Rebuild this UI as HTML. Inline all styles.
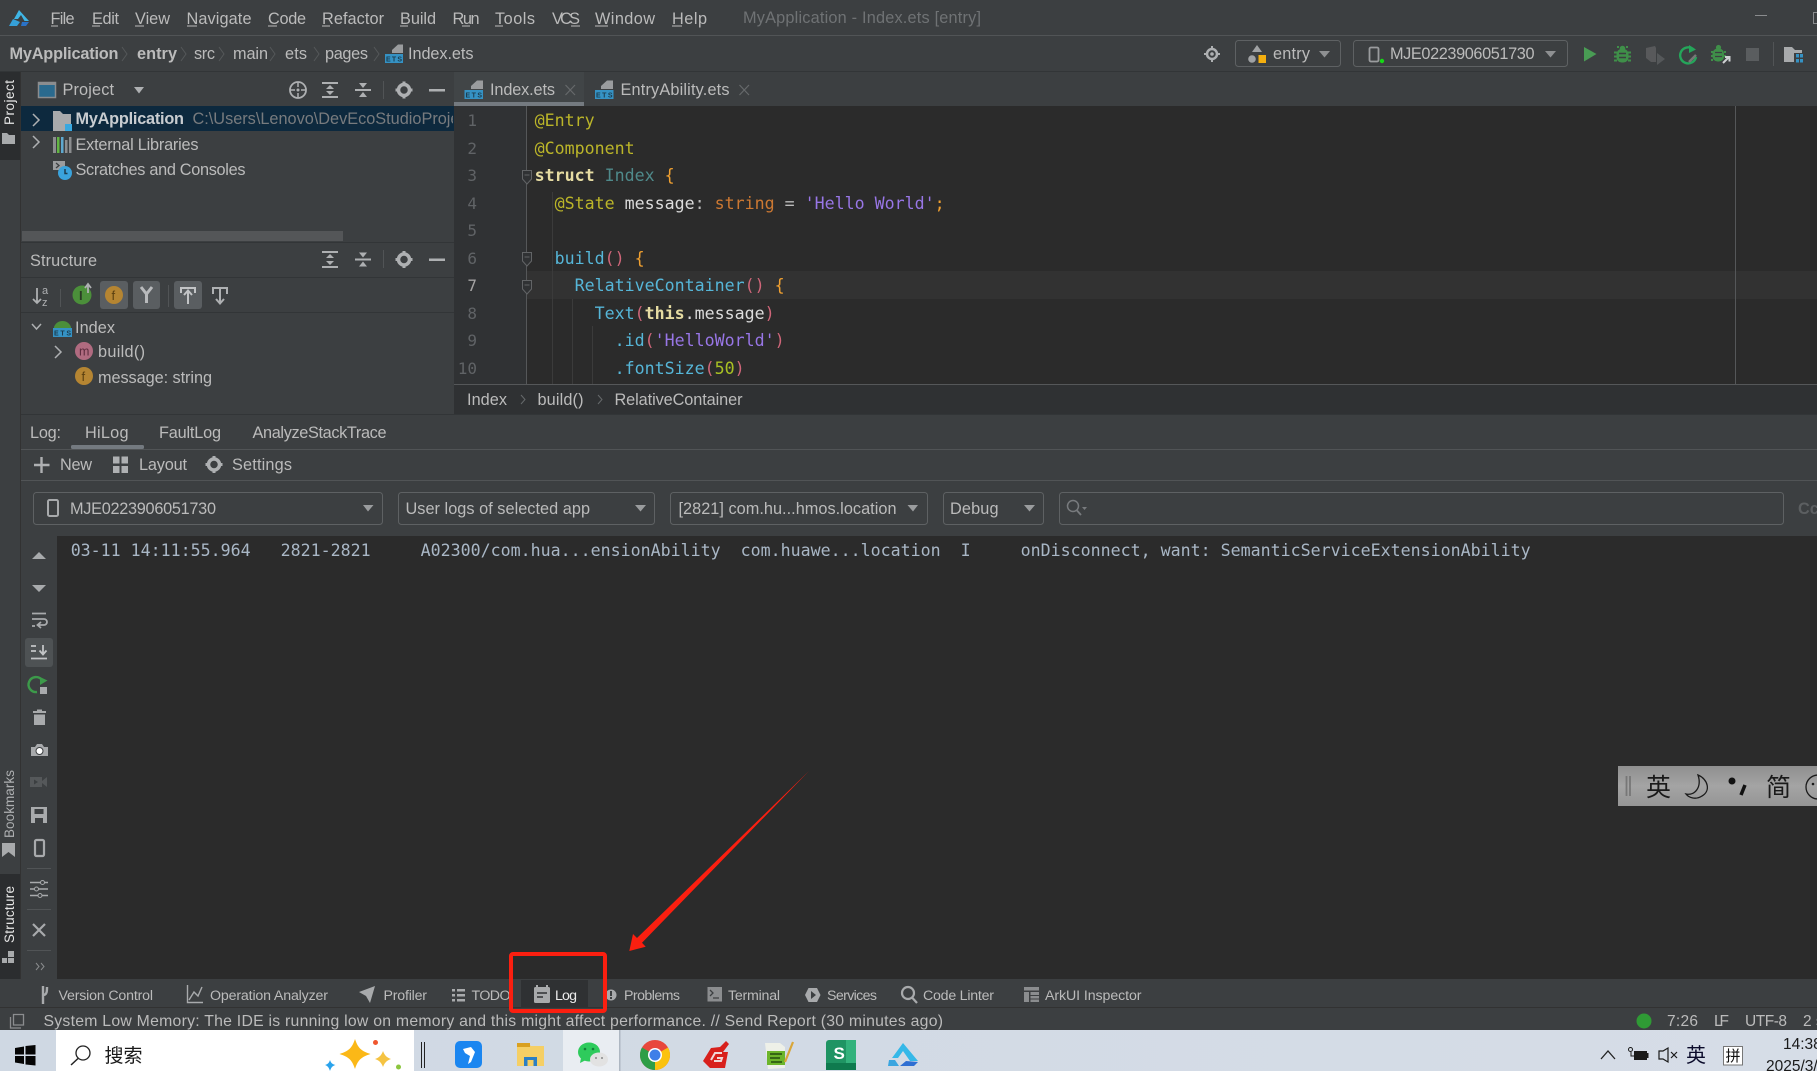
<!DOCTYPE html>
<html lang="en"><head><meta charset="utf-8"><title>MyApplication - Index.ets [entry]</title>
<style>
html,body{margin:0;padding:0;background:#3c3f41;overflow:hidden}
svg{display:block;position:absolute;left:0;top:0}
text{font-family:"Liberation Sans","Noto Sans CJK SC",sans-serif;font-size:16.3px;fill:#bbbbbb;white-space:pre}
.m{font-family:"DejaVu Sans Mono","Liberation Mono",monospace;font-size:16.62px}
.b{font-weight:bold}
.ln{font-family:"DejaVu Sans Mono",monospace;font-size:16px;fill:#606366;text-anchor:end}
.ts{font-size:14.2px}
.e{font-size:7px;font-weight:bold;fill:#1c3c4e}
.y{fill:#bbb529}.w{fill:#dcdcdc}.o{fill:#cc7832}.p{fill:#9876e6}.c{fill:#56b6d8}.r{fill:#cf6679}.br{fill:#f0a030}.k{fill:#e6dca2;font-weight:bold}.t{fill:#4f8a8b}.g{fill:#a8c023}.s{fill:#bbbbbb}
.cn{font-family:"Noto Sans CJK SC",sans-serif;fill:#1a1a1a}
</style></head><body>
<svg width="1817" height="1071" viewBox="0 0 1817 1071" xmlns="http://www.w3.org/2000/svg">
<rect width="1817" height="1071" fill="#3c3f41"/>
<!-- separators -->
<rect y="35" width="1817" height="1" fill="#515456"/>
<rect y="71" width="1817" height="1" fill="#323537"/>
<!-- logo -->
<path d="M19 10 L14 19 L18 19 L21 15 L24.500 21 L29 21 Z" fill="#3fb6e6"/>
<path d="M13 19 L9 26 L17 26 L20 22 Z" fill="#35a0d8"/><path d="M22 22 L29 22 L26 26 L21 26 Z" fill="#2a72c8"/>
<!-- menu -->
<g>
<text x="50.500" y="24" textLength="24">File</text><rect x="51" y="25.500" width="7" height="1" fill="#bbb"/>
<text x="92" y="24" textLength="27">Edit</text><rect x="92" y="25.500" width="8" height="1" fill="#bbb"/>
<text x="135" y="24" textLength="35">View</text><rect x="135" y="25.500" width="9" height="1" fill="#bbb"/>
<text x="186.500" y="24" textLength="65">Navigate</text><rect x="187" y="25.500" width="10" height="1" fill="#bbb"/>
<text x="268" y="24" textLength="38">Code</text><rect x="268" y="25.500" width="9" height="1" fill="#bbb"/>
<text x="322" y="24" textLength="62">Refactor</text><rect x="322" y="25.500" width="8" height="1" fill="#bbb"/>
<text x="400" y="24" textLength="36">Build</text><rect x="400" y="25.500" width="8" height="1" fill="#bbb"/>
<text x="452.500" y="24" textLength="27">Run</text><rect x="462" y="25.500" width="8" height="1" fill="#bbb"/>
<text x="495" y="24" textLength="40">Tools</text><rect x="495" y="25.500" width="8" height="1" fill="#bbb"/>
<text x="552" y="24" textLength="28">VCS</text><rect x="571" y="25.500" width="9" height="1" fill="#bbb"/>
<text x="595" y="24" textLength="60">Window</text><rect x="595" y="25.500" width="13" height="1" fill="#bbb"/>
<text x="672" y="24" textLength="35">Help</text><rect x="672" y="25.500" width="10" height="1" fill="#bbb"/>
<text x="743" y="23" textLength="238" style="fill:#6f7274">MyApplication - Index.ets [entry]</text>
</g>
<rect x="1755" y="15" width="12" height="1" fill="#8a8c8e"/>
<rect x="1813.500" y="12.500" width="8" height="11" fill="none" stroke="#8a8c8e"/>
<!-- navbar -->
<g fill="none" stroke="#55585a" stroke-width="1">
<path d="M122 47 L127 54 L122 61M181 47 L186 54 L181 61M219 47 L224 54 L219 61M270 47 L275 54 L270 61M314 47 L319 54 L314 61M374 47 L379 54 L374 61"/>
</g>
<text x="9.500" y="59" textLength="109" class="b">MyApplication</text>
<text x="137" y="59" textLength="40" class="b">entry</text>
<text x="194" y="59" textLength="21">src</text>
<text x="233" y="59" textLength="35">main</text>
<text x="285" y="59" textLength="22">ets</text>
<text x="325" y="59" textLength="43">pages</text>
<g><path d="M392 53 V50 L398 44.500 H403 V53 Z" fill="#9a9c9e"/><rect x="385" y="54" width="18" height="9" fill="#3592c4"/><text x="386" y="61.500" class="e" textLength="16">ETS</text></g>
<text x="408" y="59" textLength="65.500">Index.ets</text>

<!-- right nav -->
<circle cx="1212" cy="54" r="5" fill="none" stroke="#aeb0b2" stroke-width="2.500"/><circle cx="1212" cy="54" r="1.800" fill="#aeb0b2"/><path d="M1212 46v2M1212 60v2M1204 54h2M1218 54h2" stroke="#aeb0b2" stroke-width="2"/>
<rect x="1235.500" y="40.500" width="105" height="26" rx="3" fill="none" stroke="#5e6163"/>
<path d="M1257 45 L1262 52 H1252 Z" fill="#a0a2a4"/><circle cx="1252" cy="59" r="3.800" fill="#a0a2a4"/><rect x="1258.500" y="55" width="7.500" height="8" fill="#f4af0f"/>
<text x="1273" y="59" textLength="37">entry</text>
<path d="M1319 51 H1330 L1324.500 57.500 Z" fill="#8e9092"/>
<rect x="1353.500" y="40.500" width="214" height="26" rx="3" fill="none" stroke="#5e6163"/>
<rect x="1369.500" y="47.500" width="9" height="14" rx="1.500" fill="none" stroke="#9a9c9e" stroke-width="1.800"/><circle cx="1382" cy="61" r="2.200" fill="#15d815"/>
<text x="1390" y="59" textLength="144.500">MJE0223906051730</text>
<path d="M1545 51 H1556 L1550.500 57.500 Z" fill="#8e9092"/>
<path d="M1584 47 L1596.500 54 L1584 61.500 Z" fill="#499c54"/>
<!-- bug -->
<g fill="#3f8f49"><rect x="1616.500" y="49" width="12" height="13.500" rx="5"/><circle cx="1622.500" cy="48.500" r="2.800"/><path d="M1614 51.500h3v2h-3zM1628 51.500h3v2h-3zM1614 55.500h3v2h-3zM1628 55.500h3v2h-3zM1614 59.500h3v2h-3zM1628 59.500h3v2h-3zM1617 46h2v2h-2zM1626 46h2v2h-2z"/></g><path d="M1619 53.500h7M1619 57.500h7" stroke="#3c3f41" stroke-width="1.400"/>
<path d="M1646 48 L1655 46 L1656 48 V62 L1651 62 L1646 58Z" fill="#58595b"/><path d="M1657 53 L1665 59 L1657 65 Z" fill="#55585a"/>
<path d="M1693 49 A8 8 0 1 0 1696 57" fill="none" stroke="#25a55a" stroke-width="2.400"/><path d="M1689 45 L1696 49.500 L1689 53 Z" fill="#25a55a"/><path d="M1689 62 L1696 55" stroke="#777" stroke-width="2.500"/>
<g fill="#3f8f49"><rect x="1712.500" y="48.500" width="11.500" height="13" rx="5"/><circle cx="1718.500" cy="47.500" r="2.600"/><path d="M1711 51h2v2h-2zM1724 51h2v2h-2zM1711 55h2v2h-2zM1724 55h2v2h-2zM1711 59h2v2h-2z"/></g><path d="M1715 52.500h7M1715 56.500h7" stroke="#3c3f41" stroke-width="1.300"/><path d="M1723 63 L1729 57 M1725 57 h4.500 v4.500" stroke="#cfd1d3" stroke-width="2" fill="none"/>
<rect x="1746" y="48" width="13" height="13" fill="#5a5d5f"/>
<rect x="1773" y="42" width="1" height="24" fill="#515456"/>
<path d="M1784 47 H1792 L1795 50 H1802 V53 H1794 V62 H1784 Z" fill="#a8aaac"/><rect x="1796" y="54" width="3" height="3.500" fill="#3592c4"/><rect x="1800" y="54" width="3" height="3.500" fill="#3592c4"/><rect x="1796" y="59" width="3" height="3.500" fill="#3592c4"/><rect x="1800" y="59" width="3" height="3.500" fill="#3592c4"/>

<!-- left stripe -->
<rect x="20" y="72" width="1" height="907" fill="#323232"/>
<rect x="0" y="72" width="20" height="88" fill="#2b2d2f"/>
<text transform="translate(14,125) rotate(-90)" textLength="45" style="fill:#e6e6e6;font-size:13.500px">Project</text>
<path d="M2 133 H7 L9 135 H15 V144 H2 Z" fill="#a8aaac"/>
<text transform="translate(14,838) rotate(-90)" textLength="68" style="fill:#aeb0b2;font-size:13.500px">Bookmarks</text>
<path d="M2 843 H15 V857 L8.500 852 L2 857 Z" fill="#a8aaac"/>
<rect x="0" y="874" width="20" height="105" fill="#2b2d2f"/>
<text transform="translate(14,943) rotate(-90)" textLength="57" style="fill:#e6e6e6;font-size:13.500px">Structure</text>
<path d="M2 958h5v5h-5zM8 958h6v5h-6zM8 951h6v6h-6z" fill="#a8aaac"/>

<!-- project panel -->
<rect x="38.500" y="82.500" width="17" height="15" fill="#2a6a8e" stroke="#8b8d8f" stroke-width="1.500"/><rect x="38" y="82" width="18" height="3" fill="#8b8d8f"/>
<text x="62.500" y="95" textLength="51.500">Project</text>
<path d="M134 87 H144 L139 93.500 Z" fill="#aeb0b2"/>
<circle cx="298" cy="90" r="8" fill="none" stroke="#aeb0b2" stroke-width="1.800"/><circle cx="298" cy="90" r="1.500" fill="#aeb0b2"/><path d="M298 82v5M298 93v5M290 90h5M301 90h5" stroke="#aeb0b2" stroke-width="1.500"/>
<g fill="#aeb0b2"><rect x="322" y="82" width="16" height="2"/><rect x="322" y="96" width="16" height="2"/><path d="M330 85 L334 89 H326 Z M330 95 L334 91 H326 Z"/></g>
<g fill="#aeb0b2"><rect x="355" y="89" width="16" height="2"/><path d="M363 88 L367 83 H359 Z M363 92 L367 97 H359 Z"/></g>
<rect x="383" y="81" width="1" height="18" fill="#515456"/>
<circle cx="404" cy="90" r="5.500" fill="none" stroke="#aeb0b2" stroke-width="3.500"/><path d="M402.500 81.500h3v3h-3zM402.500 95.500h3v3h-3zM395.500 88.500h3v3h-3zM409.500 88.500h3v3h-3z" fill="#aeb0b2"/>
<rect x="429" y="89" width="16" height="2.500" fill="#aeb0b2"/>

<!-- tree -->
<rect x="21" y="106" width="433" height="25" fill="#0d293e"/>
<path d="M33 136 L39 142 L33 148M33 114 L39 120 L33 126" fill="none" stroke="#aeb0b2" stroke-width="1.500"/>
<path d="M53 111 H60 L63 114 H71 V124 H65 V131 H53 Z" fill="#a8aaac"/><rect x="65" y="124" width="7" height="7" fill="#38a8e0"/>
<text x="75.500" y="124" textLength="108.500" class="b" style="fill:#c8ccd0">MyApplication</text>
<svg x="0" y="106" width="453" height="25"><text x="192.500" y="18" style="fill:#787b7e">C:\Users\Lenovo\DevEcoStudioProjects</text></svg>
<g><rect x="53" y="137" width="3" height="16" fill="#8b8d8f"/><rect x="57" y="137" width="2.500" height="16" fill="#62b543"/><rect x="61" y="137" width="2.500" height="16" fill="#5ea8cf"/><rect x="65" y="140" width="2.500" height="13" fill="#8b8d8f"/><rect x="69" y="137" width="2.500" height="16" fill="#8b8d8f"/></g>
<text x="75.500" y="150" textLength="123">External Libraries</text>
<path d="M53 161 H65 V170 H53 Z" fill="#9a9c9e"/><path d="M56 163 L59 165.500 L56 168" fill="none" stroke="#3c3f41" stroke-width="1.300"/><circle cx="65" cy="173" r="7" fill="#3aa3dc"/><path d="M65 169 V173.500 H67.500" fill="none" stroke="#1c3c4e" stroke-width="1.500"/>
<text x="75.500" y="175" textLength="170">Scratches and Consoles</text>
<rect x="22" y="231" width="321" height="10" fill="#545658"/>
<rect x="21" y="242" width="433" height="1" fill="#323537"/>

<!-- structure panel -->
<text x="30" y="266" textLength="67">Structure</text>
<g fill="#aeb0b2"><rect x="322" y="251" width="16" height="2"/><rect x="322" y="266" width="16" height="2"/><path d="M330 254 L334 258 H326 Z M330 265 L334 261 H326 Z"/></g>
<g fill="#aeb0b2"><rect x="355" y="258.500" width="16" height="2"/><path d="M363 257.500 L367 252.500 H359 Z M363 261.500 L367 266.500 H359 Z"/></g>
<rect x="383" y="250" width="1" height="18" fill="#515456"/>
<circle cx="404" cy="259.500" r="5.500" fill="none" stroke="#aeb0b2" stroke-width="3.500"/><path d="M402.500 251h3v3h-3zM402.500 265h3v3h-3zM395.500 258h3v3h-3zM409.500 258h3v3h-3z" fill="#aeb0b2"/>
<rect x="429" y="258.500" width="16" height="2.500" fill="#aeb0b2"/>
<rect x="21" y="277" width="433" height="1" fill="#323537"/>
<path d="M37 288 V303 M33 299 L37 303 L41 299" fill="none" stroke="#aeb0b2" stroke-width="1.800"/>
<text x="42" y="294" style="font-size:11px;fill:#aeb0b2">a</text><text x="42" y="306" style="font-size:11px;fill:#aeb0b2">z</text>
<rect x="60" y="289" width="1" height="18" fill="#515456"/>
<circle cx="82" cy="295" r="9.500" fill="#4b8f3a"/><text x="79" y="300" style="font-size:13px;fill:#2b3b25" class="b">I</text><path d="M88 293 V285 M85 288 L88 284 L91 288" stroke="#aeb0b2" stroke-width="1.800" fill="none"/>
<rect x="100" y="281" width="28" height="28" rx="3" fill="#5a5e61"/><circle cx="114" cy="295" r="9" fill="#b58532"/><text x="111.500" y="300" style="font-size:13px;fill:#5a3f10">f</text>
<rect x="133" y="281" width="27" height="28" rx="3" fill="#5a5e61"/><path d="M141 287 L146.500 294 L152 287 M146.500 294 V303" fill="none" stroke="#b8babc" stroke-width="3"/>
<rect x="168" y="285" width="1" height="22" fill="#515456"/>
<rect x="174" y="281" width="28" height="28" rx="3" fill="#5a5e61"/><path d="M181 293 V288 H195 V293 M188 304 V291 M184 295 L188 290.500 L192 295" fill="none" stroke="#c2c4c6" stroke-width="2"/>
<path d="M213 294 V288 H227 V294 M220 288.500 V303 M216 299 L220 303.500 L224 299" fill="none" stroke="#aeb0b2" stroke-width="2"/>
<rect x="21" y="312" width="433" height="1" fill="#323537"/>
<path d="M32 324 L36.500 329 L41 324" fill="none" stroke="#aeb0b2" stroke-width="1.500"/>
<path d="M54 327 A9 9 0 0 1 71 327 V328 H54 Z" fill="#4b8f3a"/><rect x="53" y="328" width="19" height="9" fill="#3592c4"/><text x="54" y="335.500" class="e" textLength="17">ETS</text>
<text x="75" y="333" textLength="40">Index</text>
<path d="M55 346 L61 352 L55 358" fill="none" stroke="#aeb0b2" stroke-width="1.500"/>
<circle cx="84" cy="351" r="9" fill="#b06b80"/><text x="79" y="355.500" style="font-size:12.500px;fill:#5c2c3e">m</text>
<text x="98" y="357" textLength="47">build()</text>
<circle cx="84" cy="376" r="9" fill="#b58532"/><text x="81.500" y="381" style="font-size:13px;fill:#5a3f10">f</text>
<text x="98" y="383" textLength="114">message: string</text>

<!-- tabs -->
<rect x="454" y="72" width="1363" height="34" fill="#3c3f41"/>
<rect x="454" y="72" width="130" height="34" fill="#414547"/>
<rect x="454" y="102" width="130" height="4" fill="#747a80"/>
<g><path d="M471 89 V86 L477 80.500 H483 V89 Z" fill="#9a9c9e"/><rect x="464.500" y="90" width="18.500" height="9" fill="#3592c4"/><text x="465.500" y="97.500" class="e" textLength="16.500">ETS</text></g>
<text x="490" y="95" textLength="65">Index.ets</text>
<path d="M565.500 85 L575 95 M575 85 L565.500 95" stroke="#66696b" stroke-width="1.200"/>
<g><path d="M601 89 V86 L607 80.500 H613 V89 Z" fill="#9a9c9e"/><rect x="595" y="90" width="18.500" height="9" fill="#3592c4"/><text x="596" y="97.500" class="e" textLength="16.500">ETS</text></g>
<text x="620.500" y="95" textLength="109">EntryAbility.ets</text>
<path d="M739.500 85 L749 95 M749 85 L739.500 95" stroke="#66696b" stroke-width="1.200"/>

<!-- editor -->
<rect x="454" y="106" width="1363" height="278" fill="#2b2b2b"/>
<rect x="454" y="106" width="72" height="278" fill="#303234"/>
<rect x="526" y="271" width="1291" height="28" fill="#323232"/>
<rect x="526" y="106" width="1" height="278" fill="#555759"/>
<rect x="1735" y="106" width="1" height="278" fill="#555759"/>
<path d="M552.500 192 V384 M572.500 299 V384 M592.500 326 V384" stroke="#3b3b3b" stroke-width="1"/>
<g>
<text x="477" y="126" class="ln">1</text><text x="477" y="154" class="ln">2</text><text x="477" y="181" class="ln">3</text><text x="477" y="209" class="ln">4</text><text x="477" y="236" class="ln">5</text><text x="477" y="264" class="ln">6</text><text x="477" y="291" class="ln" style="fill:#a4a3a3">7</text><text x="477" y="319" class="ln">8</text><text x="477" y="346" class="ln">9</text><text x="477" y="374" class="ln">10</text>
</g>
<path d="M522.500 170.500 H531.500 V179 L527 184 L522.500 179 Z M524.500 175 H529.500 M522.500 252.500 H531.500 V261 L527 266 L522.500 261 Z M524.500 257 H529.500 M522.500 280.500 H531.500 V289 L527 294 L522.500 289 Z M524.500 285 H529.500" fill="#303234" stroke="#626466"/>
<text x="534.600" y="126" class="m y">@Entry</text>
<text x="534.600" y="154" class="m y">@Component</text>
<text x="534.600" y="181" class="m"><tspan class="k">struct</tspan><tspan class="t"> Index </tspan><tspan class="br">{</tspan></text>
<text x="534.600" y="209" class="m"><tspan class="y">  @State</tspan><tspan class="w"> message</tspan><tspan class="s">: </tspan><tspan class="o">string</tspan><tspan class="s"> = </tspan><tspan class="p">'Hello World'</tspan><tspan class="br">;</tspan></text>
<text x="534.600" y="264" class="m"><tspan class="c">  build</tspan><tspan class="r">()</tspan><tspan class="br"> {</tspan></text>
<text x="534.600" y="291" class="m"><tspan class="c">    RelativeContainer</tspan><tspan class="r">()</tspan><tspan class="br"> {</tspan></text>
<text x="534.600" y="319" class="m"><tspan class="c">      Text</tspan><tspan class="r">(</tspan><tspan class="k">this</tspan><tspan class="w">.message</tspan><tspan class="r">)</tspan></text>
<text x="534.600" y="346" class="m"><tspan class="c">        .id</tspan><tspan class="r">(</tspan><tspan class="p">'HelloWorld'</tspan><tspan class="r">)</tspan></text>
<text x="534.600" y="374" class="m"><tspan class="c">        .fontSize</tspan><tspan class="r">(</tspan><tspan class="g">50</tspan><tspan class="r">)</tspan></text>
<rect x="454" y="384" width="1363" height="1" fill="#555759"/>
<rect x="454" y="385" width="1363" height="29" fill="#2f3133"/>
<text x="467" y="405" textLength="40">Index</text>
<path d="M521 395 L525 399.500 L521 404 M598 395 L602 399.500 L598 404" fill="none" stroke="#66696b"/>
<text x="537.500" y="405" textLength="46">build()</text>
<text x="614.500" y="405" textLength="128">RelativeContainer</text>
<rect x="21" y="414" width="1796" height="1" fill="#323537"/>

<!-- log header -->
<text x="30" y="438" textLength="31">Log:</text>
<text x="85" y="438" textLength="43.500">HiLog</text>
<text x="159" y="438" textLength="62">FaultLog</text>
<text x="252.500" y="438" textLength="134">AnalyzeStackTrace</text>
<rect x="71" y="445" width="73" height="4" rx="1.500" fill="#747a80"/>
<rect x="21" y="449" width="1796" height="1" fill="#515456"/>
<path d="M34 465 H49.500 M41.500 457 V473" stroke="#aeb0b2" stroke-width="2.400"/>
<text x="60" y="470" textLength="32">New</text>
<path d="M113 456.500h6.500v7h-6.500zM121.500 456.500h6.500v7h-6.500zM113 466h6.500v7h-6.500zM121.500 466h6.500v7h-6.500z" fill="#aeb0b2"/>
<text x="139" y="470" textLength="48">Layout</text>
<circle cx="214" cy="464.500" r="5.500" fill="none" stroke="#aeb0b2" stroke-width="3.500"/><path d="M212.500 456h3v3h-3zM212.500 470h3v3h-3zM205.500 463h3v3h-3zM219.500 463h3v3h-3z" fill="#aeb0b2"/>
<text x="232" y="470" textLength="60">Settings</text>
<rect x="21" y="480" width="1796" height="1" fill="#515456"/>
<!-- dropdowns -->
<g fill="none" stroke="#5e6163">
<rect x="33.500" y="492.500" width="349" height="32" rx="3"/>
<rect x="398.500" y="492.500" width="256" height="32" rx="3"/>
<rect x="670.500" y="492.500" width="257" height="32" rx="3"/>
<rect x="943.500" y="492.500" width="100" height="32" rx="3"/>
<rect x="1059.500" y="492.500" width="724" height="32" rx="3"/>
</g>
<rect x="48" y="500" width="10" height="16" rx="1.500" fill="none" stroke="#a8aaac" stroke-width="2"/>
<text x="70" y="514" textLength="146">MJE0223906051730</text>
<path d="M363 505 H373.500 L368 511.500 Z M635 505 H646 L640.500 511.500 Z M907.500 505 H918 L913 511.500 Z M1024 505 H1035 L1029.500 511.500 Z" fill="#9a9c9e"/>
<text x="405.500" y="514" textLength="184.500">User logs of selected app</text>
<text x="678.500" y="514" textLength="218">[2821] com.hu...hmos.location</text>
<text x="950" y="514" textLength="48.500">Debug</text>
<circle cx="1073" cy="506" r="5.500" fill="none" stroke="#787b7e" stroke-width="1.500"/><path d="M1077 510.500 L1081 515" stroke="#787b7e" stroke-width="1.800"/><path d="M1082 507 H1087 L1084.500 510 Z" fill="#787b7e"/>
<text x="1798" y="514" class="b" style="fill:#5c5f61">Cc</text>

<!-- log area -->
<rect x="57" y="536" width="1760" height="443" fill="#2b2b2b"/>
<rect x="21" y="536" width="36" height="443" fill="#3c3f41"/>
<text x="70.700" y="556" class="m" style="fill:#a9b7c6">03-11 14:11:55.964   2821-2821     A02300/com.hua...ensionAbility  com.huawe...location  I     onDisconnect, want: SemanticServiceExtensionAbility</text>
<!-- log toolbar icons -->
<path d="M32 559 L39 552 L46 559 Z M32 585 H46 L39 592 Z" fill="#a8aaac"/>
<path d="M32 613.500 H46 M32 619 H44 A3 3 0 0 1 44 625 H38 M41 622 L37.500 625 L41 628 M32 626 H35" fill="none" stroke="#a8aaac" stroke-width="1.800"/>
<rect x="25" y="638" width="28" height="29" rx="3" fill="#4e5254"/>
<path d="M31 646 H36 M31 651 H36 M31 658.500 H47 M43 645 V654 M39.500 650.500 L43 654.500 L46.500 650.500" fill="none" stroke="#c2c4c6" stroke-width="1.800"/>
<path d="M42 680 A7.500 7.500 0 1 0 37 692" fill="none" stroke="#3c9a4a" stroke-width="2.400"/><path d="M40 677 L47.500 680.500 L40 685 Z" fill="#3c9a4a"/><rect x="40" y="687" width="7" height="7" fill="#a8aaac"/>
<path d="M33 711 H46 V713 H33 Z M37 709.500 H42 V711 H37 Z M34 714.500 H45 V725 H34 Z" fill="#a8aaac"/>
<path d="M31 747 H35 L37 744 H42 L44 747 H48 V756 H31 Z" fill="#a8aaac"/><circle cx="39.500" cy="751" r="3.500" fill="#fff" stroke="#3c3f41"/>
<path d="M30 777 H42 V781 L47 777 V787 L42 783 V787 H30 Z" fill="#55585a"/><path d="M34 779.500 L38 782 L34 784.500 Z" fill="#3c3f41"/>
<path d="M31 807 H47 V823 H31 Z" fill="#a8aaac"/><rect x="34.500" y="809" width="9" height="5" fill="#3c3f41"/><rect x="35" y="818" width="8" height="5" fill="#3c3f41"/>
<rect x="35" y="840" width="9" height="16" rx="1.500" fill="none" stroke="#a8aaac" stroke-width="2.200"/>
<rect x="27" y="868" width="24" height="1" fill="#515456"/>
<path d="M30 882.500 H48 M30 889 H48 M30 895.500 H48" stroke="#a8aaac" stroke-width="1.600"/><circle cx="42.500" cy="882.500" r="2" fill="#3c3f41" stroke="#a8aaac"/><circle cx="36.500" cy="889" r="2" fill="#3c3f41" stroke="#a8aaac"/><circle cx="40" cy="895.500" r="2" fill="#3c3f41" stroke="#a8aaac"/>
<rect x="27" y="909" width="24" height="1" fill="#515456"/>
<path d="M33 924 L45 936 M45 924 L33 936" stroke="#a8aaac" stroke-width="2.200"/>
<rect x="27" y="950" width="24" height="1" fill="#515456"/>
<path d="M36 963 L39 966.500 L36 970 M41 963 L44 966.500 L41 970" fill="none" stroke="#8a8c8e"/>

<!-- IME bar -->
<defs><linearGradient id="im" x1="0" y1="0" x2="0" y2="1"><stop offset="0" stop-color="#8f8f8f"/><stop offset=".5" stop-color="#a4a4a4"/><stop offset="1" stop-color="#959595"/></linearGradient>
<linearGradient id="tb" x1="0" y1="0" x2="1" y2="0"><stop offset="0" stop-color="#cfd8e3"/><stop offset="1" stop-color="#d6dde7"/></linearGradient></defs>
<rect x="1618" y="766" width="199" height="40" fill="url(#im)"/>
<path d="M1626.500 776 V796 M1630 776 V796" stroke="#777" stroke-width="1.800"/>
<text x="1646" y="796" class="cn" style="font-size:25px">英</text>
<path d="M1698 775 C1708 779 1711 791 1702 796 C1696 800 1689 798 1686 794 C1695 796 1702 787 1698 775 Z" fill="none" stroke="#1a1a1a" stroke-width="1.300"/>
<circle cx="1732" cy="781" r="3.500" fill="#111"/><path d="M1745 785 L1741 795" stroke="#111" stroke-width="3.500"/>
<text x="1766" y="796" class="cn" style="font-size:25px">简</text>
<circle cx="1818" cy="787" r="12" fill="none" stroke="#1a1a1a" stroke-width="1.300"/><circle cx="1813" cy="784" r="1.300" fill="#1a1a1a"/>

<!-- arrow -->
<polygon points="809,771 642,942.700 645.700,946.700 629.300,951 633,934 637,938" fill="#fb1f10"/>

<!-- tool window bar -->
<rect x="0" y="979" width="1817" height="28" fill="#3c3f41"/>
<rect x="0" y="1007" width="1817" height="1" fill="#323232"/>
<rect x="521" y="980" width="67" height="27" fill="#2f3133"/>
<path d="M43 986 V1004 M43 995 C47 995 47 991 47 987" fill="none" stroke="#a8aaac" stroke-width="2.400"/>
<text x="58.500" y="1000" textLength="94.500" class="ts">Version Control</text>
<path d="M187.500 985 V1002.500 H203 M189 1000 L194 992 L198 996 L202 987" fill="none" stroke="#a8aaac" stroke-width="1.400"/>
<text x="210" y="1000" textLength="118" class="ts">Operation Analyzer</text>
<path d="M359 992 L375 986 L370 1003 L366 996 Z" fill="#a8aaac"/>
<text x="383.500" y="1000" textLength="43.500" class="ts">Profiler</text>
<path d="M452 989h3v2.500h-3zM457 989h8v2.500h-8zM452 994h3v2.500h-3zM457 994h8v2.500h-8zM452 999h3v2.500h-3zM457 999h8v2.500h-8z" fill="#a8aaac"/>
<text x="471.500" y="1000" textLength="39" class="ts">TODO</text>
<rect x="534" y="987" width="16" height="16" rx="1.500" fill="#a8aaac"/><path d="M537 985 V989 M547 985 V989" stroke="#a8aaac" stroke-width="2"/><path d="M537 993 H547 M537 997 H543" stroke="#2f3133" stroke-width="1.600"/>
<text x="555" y="1000" textLength="22" class="ts" style="fill:#ececec">Log</text>
<circle cx="611" cy="995" r="5.500" fill="#a8aaac"/><rect x="610" y="991" width="2" height="5" fill="#3c3f41"/><rect x="610" y="997" width="2" height="2" fill="#3c3f41"/>
<text x="624" y="1000" textLength="56" class="ts">Problems</text>
<rect x="707.500" y="987" width="14.500" height="14.500" fill="#8b8d8f"/><path d="M710 990 L713 993 L710 996 M713 998 H719" fill="none" stroke="#3c3f41" stroke-width="1.300"/>
<text x="728" y="1000" textLength="52" class="ts">Terminal</text>
<path d="M808.500 988 H817 L820.500 995 L817 1002 H808.500 L805 995 Z" fill="#a8aaac"/><path d="M811 991 L816 995 L811 999 Z" fill="#3c3f41"/>
<text x="827" y="1000" textLength="50" class="ts">Services</text>
<circle cx="908" cy="993" r="6" fill="none" stroke="#a8aaac" stroke-width="2.200"/><path d="M912.500 998 L917 1003" stroke="#a8aaac" stroke-width="2.200"/>
<text x="923" y="1000" textLength="71" class="ts">Code Linter</text>
<path d="M1024 987h15v3.500h-15zM1024 992h5v10h-5zM1030.500 992h8.500v3h-8.500zM1030.500 996h8.500v2.500h-8.500zM1030.500 999.500h8.500v2.500h-8.500z" fill="#8b8d8f"/>
<text x="1045" y="1000" textLength="96.500" class="ts">ArkUI Inspector</text>

<!-- status bar -->
<rect x="0" y="1008" width="1817" height="22" fill="#3c3f41"/>
<path d="M13.500 1014.500 H23.500 V1025 H13.500 Z M10.500 1017 V1028 H21" fill="none" stroke="#8b8d8f" stroke-width="1.300"/>
<svg x="0" y="1008" width="1817" height="22"><text x="43.500" y="18" textLength="899.500" style="font-size:15.800px">System Low Memory: The IDE is running low on memory and this might affect performance. // Send Report (30 minutes ago)</text>
<circle cx="1644" cy="13" r="7.500" fill="#2f9a35"/>
<text x="1667" y="18" textLength="31" style="font-size:15.500px">7:26</text>
<text x="1714" y="18" textLength="15" style="font-size:15.500px">LF</text>
<text x="1745" y="18" textLength="42" style="font-size:15.500px">UTF-8</text>
<text x="1803" y="18" style="font-size:15.500px">2 s</text></svg>

<!-- red box -->
<rect x="511" y="954" width="94" height="57" rx="2" fill="none" stroke="#fb1f10" stroke-width="4"/>

<!-- taskbar -->
<rect x="0" y="1030" width="1817" height="41" fill="url(#tb)"/>
<path d="M15 1048 L24 1046.500 V1054.500 H15 Z M25.500 1046 L35.500 1045 V1054.500 H25.500 Z M15 1056 H24 V1064 L15 1062.500 Z M25.500 1056 H35.500 V1065.500 L25.500 1064.500 Z" fill="#050505"/>
<rect x="56" y="1030" width="358" height="41" fill="#fff"/>
<circle cx="83" cy="1053" r="7" fill="none" stroke="#222" stroke-width="1.300"/><path d="M78 1058.500 L71 1065" stroke="#222" stroke-width="1.500"/>
<text x="104.500" y="1062" style="font-size:19px;fill:#1a1a1a" class="cn">搜索</text>
<path d="M355 1039 C358 1048 361 1051 370.500 1054 C361 1057 358 1060 355 1069 C352 1060 349 1057 339.500 1054 C349 1051 352 1048 355 1039 Z" fill="#fbb817"/>
<path d="M383 1051 C384.500 1055 386.500 1057.500 391 1059 C386.500 1060.500 384.500 1063 383 1067 C381.500 1063 379.500 1060.500 375 1059 C379.500 1057.500 381.500 1055 383 1051 Z" fill="#f5c342"/>
<path d="M330 1060 C331 1063 332 1064 335.500 1065 C332 1066 331 1068 330 1071 C329 1068 328 1066 325 1065 C328 1064 329 1063 330 1060 Z" fill="#2aa3ec"/>
<circle cx="375.500" cy="1042.500" r="2.500" fill="#f0562e"/><circle cx="398.500" cy="1067" r="2.500" fill="#8cc63f"/>
<rect x="421" y="1042" width="1" height="26" fill="#222"/><rect x="424" y="1042" width="1" height="26" fill="#222"/>
<rect x="455" y="1041" width="27" height="27" rx="5" fill="#1b86f0"/><path d="M463 1049 L471 1047 L475 1052 L471 1062 L468 1064 L470 1056 L465 1053 Z" fill="#fff"/>
<path d="M517 1043 H527 L531 1046 H544 V1066 H517 Z" fill="#f5cf65"/><rect x="517" y="1043" width="13" height="4" fill="#d9a020"/><path d="M524 1066 V1057 H537 V1066 H533.500 V1060 H527.500 V1066 Z" fill="#2b7fc4"/>
<rect x="563" y="1030" width="56" height="41" fill="#e9edf2"/><rect x="619" y="1030" width="1.500" height="41" fill="#aeb7c2"/>
<ellipse cx="589" cy="1052" rx="11" ry="9.500" fill="#2ecb5c"/><path d="M581 1058 L580 1063 L586 1060 Z" fill="#2ecb5c"/><circle cx="585" cy="1049" r="1.300" fill="#14803a"/><circle cx="593" cy="1049" r="1.300" fill="#14803a"/>
<ellipse cx="599" cy="1059.500" rx="9" ry="7" fill="#e2e2e2"/><circle cx="596" cy="1058" r="1" fill="#888"/><circle cx="602" cy="1058" r="1" fill="#888"/>
<circle cx="655" cy="1055" r="15" fill="#e8473c"/><path d="M655 1055 L668 1047.500 A15 15 0 0 1 655 1070 Z" fill="#fbc20e"/><path d="M655 1055 L655 1070 A15 15 0 0 1 642 1047.500 Z" fill="#2e9e47"/><circle cx="655" cy="1055" r="7" fill="#fff"/><circle cx="655" cy="1055" r="5.500" fill="#3f7fe8"/>
<path d="M726 1041 L729 1044 L723 1052 H728 L725 1068 H710 L703 1061 L711 1048 L720 1047 Z" fill="#d8201c"/><path d="M711 1060 L715 1053 H722 M714 1061 H721 L722 1058 H717" fill="none" stroke="#f0d8d8" stroke-width="2"/>
<path d="M765 1043 H780 L785 1047 V1068 L768 1069 Z" fill="#eef0e8"/><rect x="767" y="1051" width="18" height="14" fill="#6cb52a"/><path d="M770 1054 H782 M770 1058 H780 M771 1062 H782" stroke="#2f5c12" stroke-width="1.800"/><path d="M785 1062 L793 1042" stroke="#d9a63a" stroke-width="2.200"/>
<rect x="826" y="1040" width="30" height="30" rx="3" fill="#1f9463"/><rect x="846" y="1040" width="10" height="30" fill="#33b27c"/><rect x="826" y="1063" width="30" height="7" fill="#0f7a4e"/>
<text x="833.500" y="1059" class="b" style="font-size:17px;fill:#fff">S</text>
<path d="M903 1043 L892 1058 L898 1058 L903 1051 L910 1061 L918 1061 Z" fill="#35b8e8"/><path d="M889 1060 L888 1066 L899 1066 L895 1060 Z" fill="#3aa5e0"/><path d="M906 1061 L918 1062 L914 1066 L900 1066 Z" fill="#2e6ed2"/>
<!-- tray -->
<path d="M1601 1059 L1608 1051 L1615 1059" fill="none" stroke="#222" stroke-width="1.300"/>
<rect x="1634" y="1051" width="13" height="9" fill="#1a1a1a"/><circle cx="1630.500" cy="1049.500" r="2" fill="none" stroke="#1a1a1a"/><path d="M1631 1052 V1056 H1634" fill="none" stroke="#1a1a1a"/><rect x="1647" y="1053" width="1.500" height="5" fill="#1a1a1a"/>
<path d="M1659 1051 H1663 L1668 1048 V1062 L1663 1059 H1659 Z" fill="none" stroke="#1a1a1a" stroke-width="1.200"/><path d="M1671 1052 L1677 1058 M1677 1052 L1671 1058" stroke="#1a1a1a" stroke-width="1.200"/>
<text x="1686" y="1062" class="cn" style="font-size:20px;fill:#0a0a2a">英</text>
<rect x="1723.500" y="1046.500" width="19" height="18.500" fill="#fff" stroke="#777"/>
<text x="1725.500" y="1061" class="cn" style="font-size:15px;fill:#111">拼</text>
<text x="1783" y="1049" style="font-size:15.500px;fill:#1a1a1a">14:38</text>
<text x="1766" y="1071" style="font-size:15.500px;fill:#1a1a1a">2025/3/11</text>
</svg>
</body></html>
